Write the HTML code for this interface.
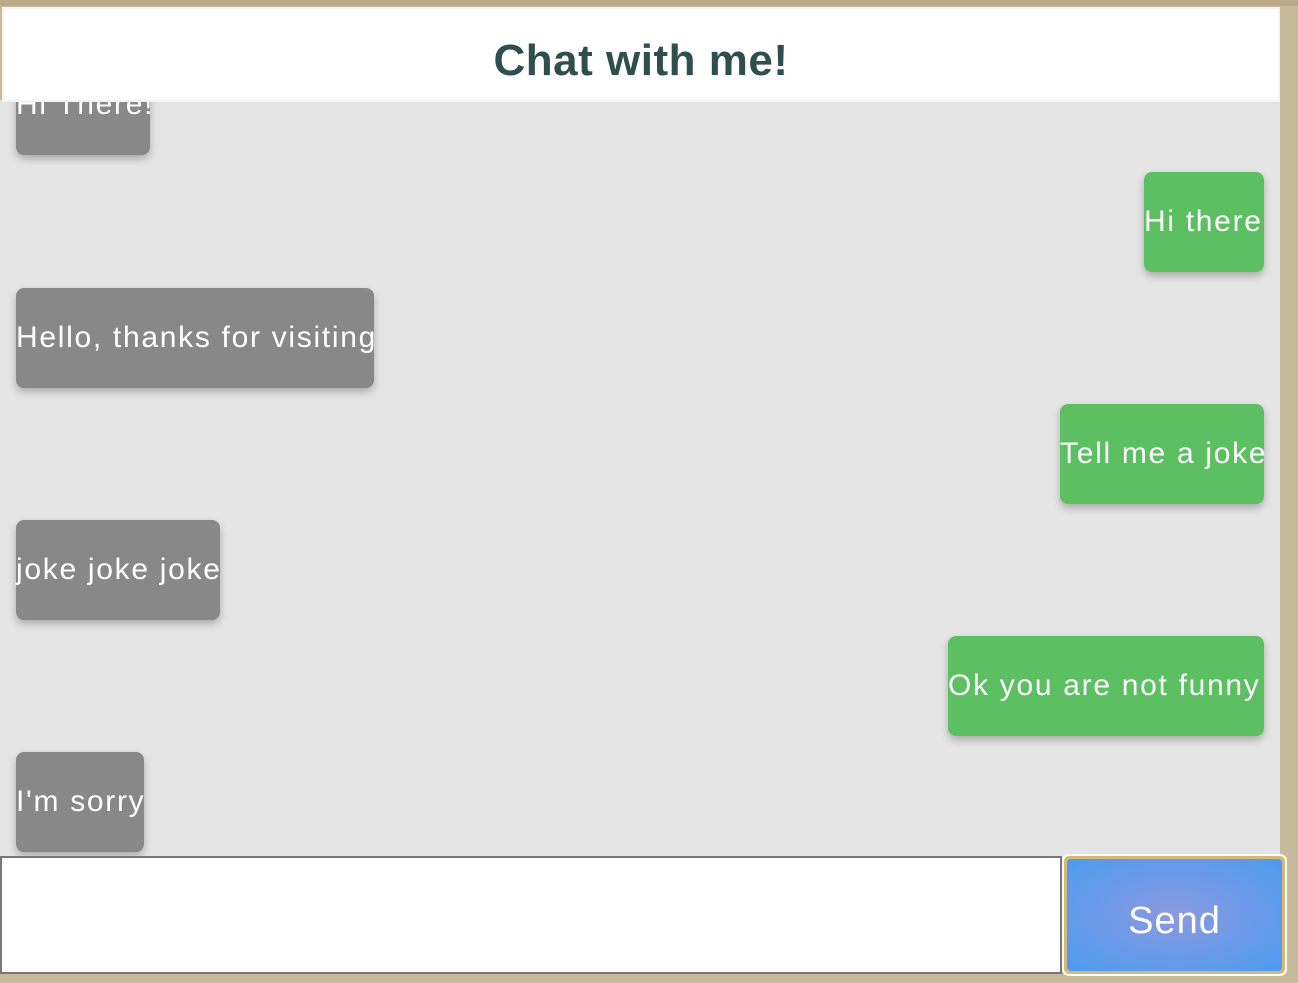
<!DOCTYPE html>
<html><head><meta charset="utf-8"><style>
*{margin:0;padding:0;box-sizing:border-box}
body{width:1298px;height:978px;background:#c8bb9b;position:relative;overflow:hidden;font-family:"Liberation Sans",sans-serif}
.top{position:absolute;left:0;top:0;width:1298px;height:6px;background:#b9aa8a}
.chat{position:absolute;left:0;top:100px;width:1280px;height:758px;background:#e5e5e5}
.hdr{position:absolute;left:2px;top:7px;width:1278px;height:95px;background:#fff;border:2px solid #f4f4f4;text-align:center;font-weight:bold;font-size:44px;letter-spacing:.5px;color:#2f4f4f;line-height:104px}
.b{position:absolute;height:100px;border-radius:8px;color:#fff;font-size:30px;line-height:100px;white-space:nowrap;box-shadow:0 4px 8px rgba(0,0,0,.25);overflow:visible;letter-spacing:1.7px}
.g{background:#888}
.gr{background:#5cc062}
.inp{position:absolute;left:0;top:856px;width:1062px;height:118px;background:#fff;border:2px solid #777}
.send{position:absolute;left:1062px;top:854px;width:225px;height:122px;border:2px solid #fff;border-radius:7px;background:#d8b878;padding:3px}
.send div{width:100%;height:100%;border-radius:4px;background:radial-gradient(ellipse at center,#8b9ae0 0%,#4c9bf0 100%);color:#fff;font-size:38px;letter-spacing:1px;text-align:center;line-height:124px}
</style></head><body>
<div class="top"></div>
<div class="chat"></div>
<div class="b g" style="left:16px;top:55px;width:134px;">Hi There!</div>
<div class="hdr">Chat with me!</div>
<div class="b gr" style="left:1144px;top:172px;width:120px">Hi there</div>
<div class="b g" style="left:16px;top:288px;width:358px">Hello, thanks for visiting</div>
<div class="b gr" style="left:1060px;top:404px;width:204px">Tell me a joke</div>
<div class="b g" style="left:16px;top:520px;width:204px">joke joke joke</div>
<div class="b gr" style="left:948px;top:636px;width:316px">Ok you are not funny</div>
<div class="b g" style="left:16px;top:752px;width:128px">I'm sorry</div>
<div class="inp"></div>
<div class="send"><div>Send</div></div>
</body></html>
